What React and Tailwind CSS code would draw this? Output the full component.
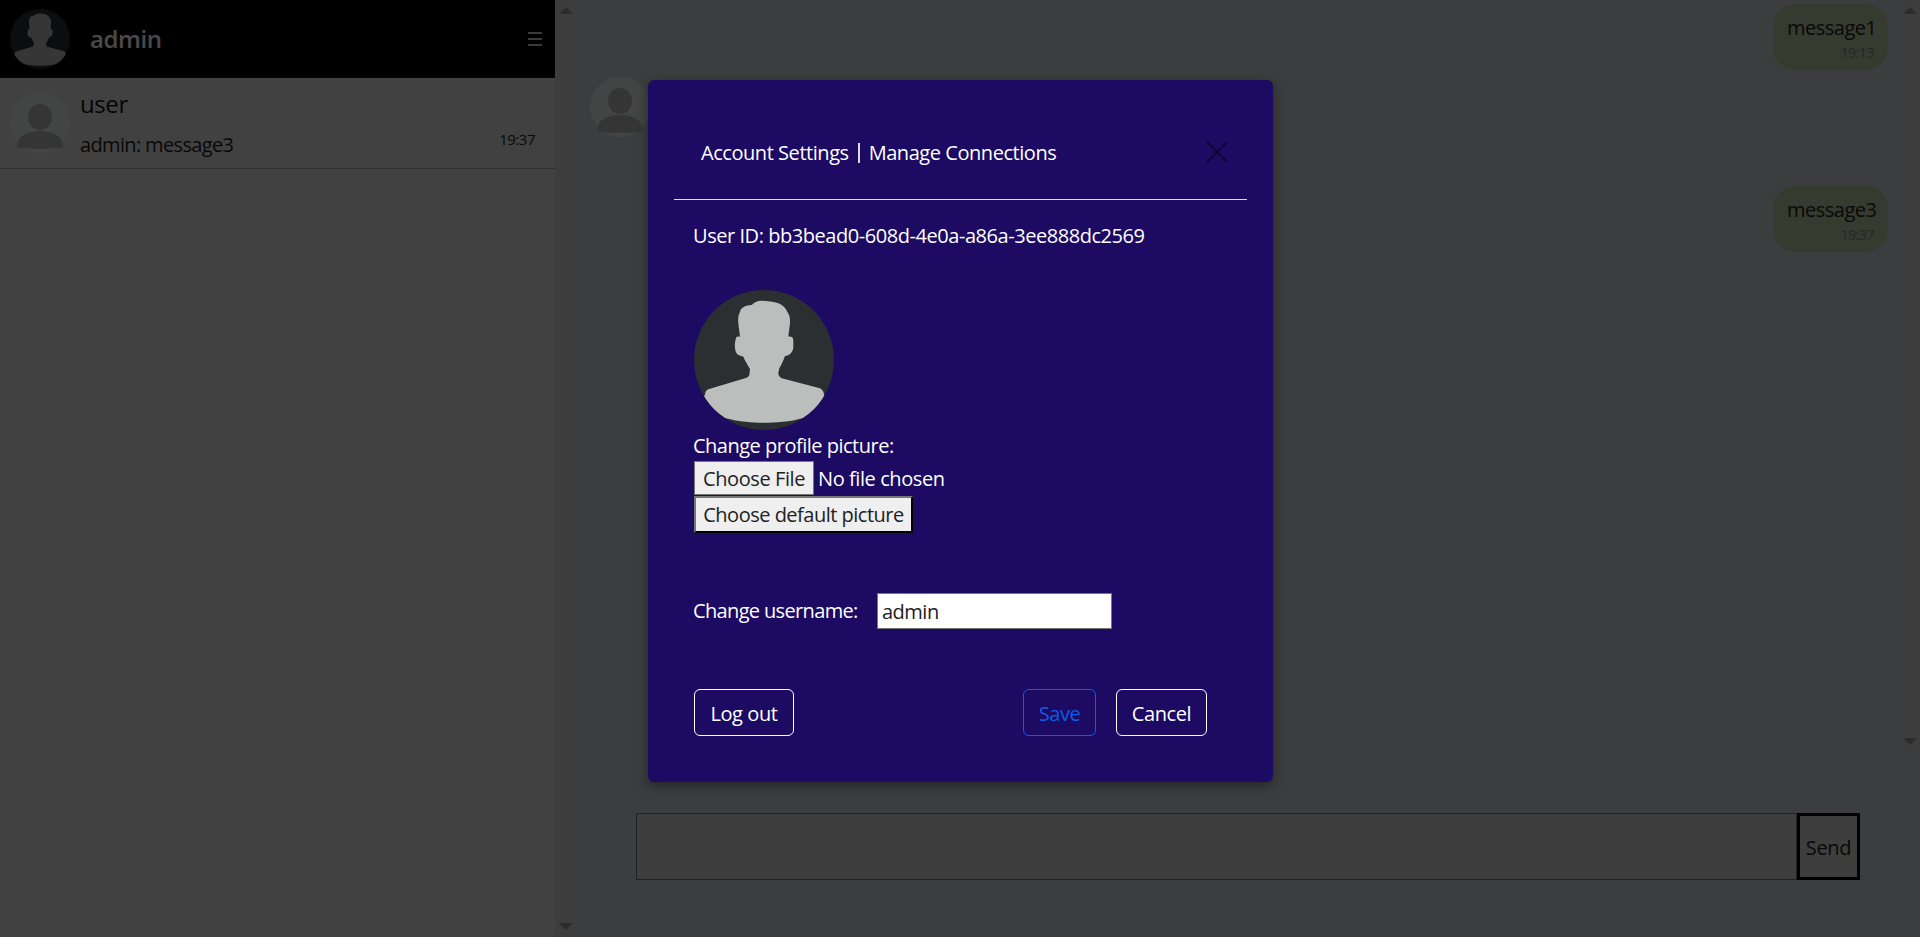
const font = { fontFamily: '"Open Sans", "Noto Sans", sans-serif' };

function PersonPhoto({ size, bg = "#2b2f31", fg = "#bbbebc" }) {
  return (
    <svg width={size} height={size} viewBox="0 0 140 140" className="block shrink-0">
      <defs>
        <clipPath id={"c" + size}><circle cx="70" cy="70" r="70" /></clipPath>
      </defs>
      <circle cx="70" cy="70" r="70" fill={bg} />
      <path
        clipPath={"url(#c" + size + ")"}
        fill={fg}
        d="M67.700 10.700C63 10.700 60 12.500 57.700 15C52 15.500 47 17 46 21.700C44 26 44 29 44.300 33.300L46 46.700C44 46 42 46.500 42 48.300C40.800 52 40.800 55 41 58.300C41.500 62 42.500 64 44.300 65C46 66 48 66 49.300 66.700C51 71 54 75 56 79.300L55.300 85C54.500 87 53 87.800 51 88.300L14.300 99.300C12 100.500 11 102.500 11 105L5 110L31 128C46 132 58 132.700 69.300 132.700C82 132.700 96 132 109 128L135 110L130 105C130 102 128.500 99.500 126 98.300L87.700 88.300C85.500 87 84.300 85.500 84.300 83.300L85.300 78.300C88 74 89.500 70 91 66C93 65.700 95 65 96 64C98.500 62 99.500 59 99.300 56.700C99.500 52 99.500 49 98.300 47.300C97 46.500 95.500 46.300 94.300 46.700L96 33.300C96.300 28 95.500 25 93.300 21.700C91 17 88 15 84.300 13.300C80 11.500 73 10.700 67.700 10.700Z"
      />
    </svg>
  );
}

function GenericAvatar() {
  return (
    <svg width="60" height="60" viewBox="0 0 60 60" className="block shrink-0">
      <circle cx="30" cy="30" r="30" fill="#e9eeee" />
      <ellipse cx="30" cy="24" rx="12" ry="13" fill="#b8b8b8" />
      <path d="M7.500 54V52C7.500 43 18 38 30 38C42 38 52.500 43 52.500 52V54C46 55.500 38 55.800 30 55.800C22 55.800 14 55.500 7.500 54Z" fill="#b8b8b8" />
    </svg>
  );
}

function ScrollBar({ className }) {
  return (
    <div className={"flex flex-col items-center justify-between shrink-0 w-[21px] bg-[#d5d5d5] py-[7px] " + className}>
      <svg width="14" height="7" viewBox="0 0 14 7"><path d="M7 0L14 7H0Z" fill="#969696" /></svg>
      <svg width="14" height="7" viewBox="0 0 14 7"><path d="M0 0H14L7 7Z" fill="#969696" /></svg>
    </div>
  );
}

function OwnBubble({ text, time, className = "" }) {
  return (
    <div className={"self-end w-[115px] h-[66px] rounded-[22px] bg-[#b8cda3] pr-[14px] pl-[14px] pt-[10px] text-right " + className}>
      <div className="text-[20px] leading-[28px] text-[#222] tracking-[-0.5px] whitespace-nowrap">{text}</div>
      <div className="text-[14px] leading-[20px] mt-[1px] text-[#888] tracking-[-0.5px]">{time}</div>
    </div>
  );
}

export default function App() {
  return (
    <div style={font} className="relative flex h-[937px] w-full overflow-hidden bg-[#d3d6d9] text-[20px]">
      {/* sidebar */}
      <aside className="flex w-[576px] shrink-0 bg-[#e3e3e3]">
        <div className="w-[555px] shrink-0">
          <header className="flex h-[78px] items-center bg-black pl-[10px] pr-[13px]">
            <PersonPhoto size={60} />
            <span className="ml-[20px] flex-1 text-[24px] font-semibold text-white tracking-[-0.4px]">admin</span>
            <span className="flex flex-col gap-[4px] w-[14px]">
              <i className="block h-[2px] bg-[#ccc]" /><i className="block h-[2px] bg-[#ccc]" /><i className="block h-[2px] bg-[#ccc]" />
            </span>
          </header>
          <div className="flex h-[91px] items-center border-b border-[#aaa] pl-[10px] pr-[20px] pb-[1px]">
            <GenericAvatar />
            <div className="ml-[10px] flex-1 self-stretch">
              <div className="mt-[8px] text-[24px] leading-[36px] font-medium text-[#111] tracking-[-0.4px]">user</div>
              <div className="mt-[9px] flex items-center justify-between">
                <span className="text-[20px] leading-[28px] text-[#222] tracking-[-0.65px]">admin: message3</span>
                <span className="text-[15px] leading-[20px] -mt-[12px] text-[#222] tracking-[-0.5px]">19:37</span>
              </div>
            </div>
          </div>
        </div>
        <ScrollBar className="h-full" />
      </aside>

      {/* chat */}
      <main className="flex min-w-0 flex-1 flex-col">
        <div className="flex h-[752px] shrink-0">
          <div className="flex flex-1 flex-col pl-[14px] pr-[11px] pt-[4px]">
            <OwnBubble text="message1" time="19:13" />
            <div className="mt-[7px] h-[60px]"><GenericAvatar /></div>
            <OwnBubble text="message3" time="19:37" className="mt-[49px]" />
          </div>
          <ScrollBar className="h-full" />
        </div>
        <div className="flex pl-[60px] pr-[60px] pt-[61px]">
          <input className="h-[67px] flex-1 min-w-0 border border-[#777] bg-[#d9d9d9]" />
          <button className="h-[67px] w-[63px] border-[3px] border-black bg-[#d9d9d9] pt-[2px] text-[20px] text-[#222] tracking-[-0.3px]">Send</button>
        </div>
      </main>

      {/* backdrop + dialog */}
      <div className="absolute inset-0 bg-black/[.715]" />
      <div className="absolute left-[648px] top-[80px] flex h-[702px] w-[625px] flex-col rounded-[6px] bg-[#1c0a63] px-[26px] text-white shadow-[0_4px_12px_rgba(0,0,0,.4)]">
        <div className="flex h-[120px] shrink-0 items-center justify-between border-b border-[#dee2e6] pl-[27px] pr-[16px] pt-[27px]">
          <div className="flex items-center text-[20px] tracking-[-0.45px]">
            <span>Account Settings</span>
            <span className="mx-[9px] h-[20px] w-[2px] bg-[#ddd]" />
            <span>Manage Connections</span>
          </div>
          <svg width="24" height="24" viewBox="0 0 24 24" className="-mt-[2px] -ml-[2px] mr-[2px]" stroke="#0d0635" strokeWidth="2" fill="none">
            <path d="M2 2L22 22M22 2L2 22" />
          </svg>
        </div>
        <div className="flex flex-1 flex-col px-[20px]">
          <div className="mt-[22px] -ml-[1px] text-[20px] leading-[28px] tracking-[-0.45px]">User ID: bb3bead0-608d-4e0a-a86a-3ee888dc2569</div>
          <div className="mt-[40px]"><PersonPhoto size={140} /></div>
          <div className="mt-[2px] -ml-[1px] leading-[28px] tracking-[-0.5px]">Change profile picture:</div>
          <input type="file" className="block mt-[1px] h-[34px] text-[20px] leading-[28px] tracking-[-0.42px] file:h-[34px] file:w-[120px] file:mr-[4px] file:border file:border-[#767676] file:bg-[#efefef] file:text-[#222] file:px-0 file:pt-[1px] file:tracking-[-0.42px]" />
          <button className="mt-[1px] h-[37px] w-[219px] self-start border-[2px] border-t-[#767676] border-l-[#767676] border-r-black border-b-black bg-[#efefef] text-[20px] text-[#222] tracking-[-0.5px]">Choose default picture</button>
          <div className="mt-[60px] flex h-[36px] items-center">
            <span className="-ml-[1px] w-[184px] tracking-[-0.65px]">Change username:</span>
            <input defaultValue="admin" className="h-[36px] w-[235px] border border-[#767676] bg-white px-[4px] text-[20px] text-[#222] tracking-[-0.5px]" />
          </div>
          <div className="mt-[60px] flex items-center">
            <button className="h-[47px] w-[100px] rounded-[6px] border border-white pt-[2px] text-[20px] tracking-[-0.42px]">Log out</button>
            <button className="ml-auto h-[47px] w-[73px] rounded-[6px] border border-[#0d5ee6] pt-[2px] text-[20px] text-[#0d5ee6] tracking-[-0.42px]">Save</button>
            <button className="ml-[20px] mr-[20px] h-[47px] w-[91px] rounded-[6px] border border-white pt-[2px] text-[20px] tracking-[-0.42px]">Cancel</button>
          </div>
        </div>
      </div>
    </div>
  );
}
